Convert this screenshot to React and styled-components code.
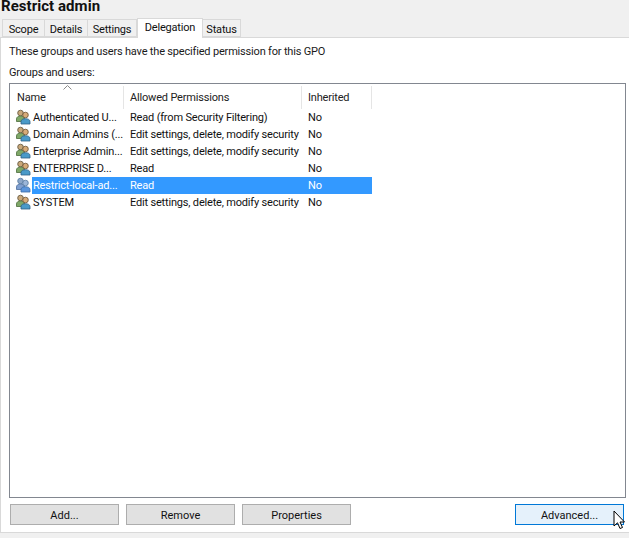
import React from "react";
import styled, { createGlobalStyle } from "styled-components";

const Global = createGlobalStyle`
  html, body { margin: 0; padding: 0; background: #f0f0f0; }
  body { font-family: Roboto, "Noto Sans", sans-serif; font-size: 11px; letter-spacing: -.18px; color: #000; }
`;
const Page = styled.div`
  position: relative; width: 629px; height: 538px; overflow: hidden; background: #f0f0f0;
  display: flex; flex-direction: column;
`;
const Title = styled.h1`
  margin: -3px 0 0 1px; height: 20px; font: 700 15px/19px Roboto, sans-serif; letter-spacing: .05px; color: #111; flex: none;
`;
const Tabs = styled.div`
  display: flex; height: 20px; padding-left: 2px; align-items: flex-end; position: relative; z-index: 1; flex: none;
`;
const Tab = styled.div`
  box-sizing: border-box; width: ${p => p.$w}px; height: ${p => p.$active ? 20 : 18}px;
  margin-bottom: ${p => p.$active ? -1 : 0}px;
  text-align: center; line-height: ${p => p.$active ? 18 : 19}px;
  background: ${p => p.$active ? "#fff" : "#f0f0f0"};
  border: 1px solid #d9d9d9; border-bottom: ${p => p.$active ? "none" : "1px solid #d9d9d9"};
  border-left-width: ${p => p.$first || p.$active ? 1 : 0}px;
  color: #111;
`;
const Panel = styled.div`
  box-sizing: border-box; height: 496px; background: #fff; border: 1px solid #d9d9d9; border-width: 1px 0 1px 1px;
  display: flex; flex-direction: column; padding: 6px 3px 7px 8px; flex: none;
`;
const Caption = styled.div`
  height: ${p => p.$h}px; line-height: 15px; color: #1a1a1a; flex: none;
`;
const List = styled.div`
  box-sizing: border-box; height: 415px; border: 1px solid #828790; padding-left: 5px; background: #fff; flex: none;
`;
const Row = styled.div`
  display: grid; grid-template-columns: 109px 178px 70px; width: 357px; box-sizing: border-box; height: 17px; align-items: center; line-height: 18px; color: #111;
`;
const HeaderRow = styled(Row)`
  height: 25px; position: relative;
`;
const HeadCell = styled.div`
  height: 23px; margin-top: 2px; line-height: 24px; padding-left: ${p => p.$pad || 6}px; border-right: 1px solid #e5e5e5; color: #222;
`;
const SortArrow = styled.svg`
  position: absolute; left: 48px; top: 1px;
`;
const NameCell = styled.div`
  display: flex; align-items: center; height: 17px; white-space: nowrap;
`;
const NameText = styled.span`
  flex: 1; padding-left: 1px; height: 17px; background: ${p => p.$sel ? "#3399ff" : "transparent"}; color: ${p => p.$sel ? "#fff" : "#111"};
`;
const SelCell = styled.div`
  padding-left: 6px; white-space: nowrap; background: ${p => p.$sel ? "#3399ff" : "transparent"}; color: ${p => p.$sel ? "#fff" : "#111"}; height: 17px;
`;
const Buttons = styled.div`
  display: flex; margin-top: 6px; padding-left: 1px; gap: 7px;
`;
const Button = styled.button`
  box-sizing: border-box; width: 109px; height: 21px; padding: 1px 0 0; margin-left: ${p => p.$ml || 0}px;
  font: inherit; line-height: 19px; color: #111; text-align: center;
  background: ${p => p.$focus ? "#e5f1fb" : "#e1e1e1"};
  border: 1px solid ${p => p.$focus ? "#0078d7" : "#adadad"};
`;
const Cursor = styled.svg`
  position: absolute; left: 613px; top: 510px;
`;

const UserIcon = ({ sel }) => (
  <svg width="17" height="17" viewBox="0 0 17 17" style={{ flex: "none" }}>
    <circle cx="5.500" cy="4" r="2.800" fill={sel ? "#8ca6c8" : "#c9a87a"} stroke={sel ? "#55789f" : "#5f5238"} strokeWidth=".8" />
    <path d="M1.500 12.500V10c0-2 1.800-3 4-3s4 1 4 3v2.500z" fill={sel ? "#7f9fd0" : "#7fa868"} stroke={sel ? "#4a6c9c" : "#4a6b3a"} strokeWidth=".8" />
    <circle cx="10.500" cy="6" r="2.800" fill={sel ? "#9cb6d8" : "#d8ab78"} stroke={sel ? "#55789f" : "#6a5030"} strokeWidth=".8" />
    <path d="M6 15v-2.500c0-1.800 2-2.800 4.500-2.800s4.500 1 4.500 2.800V15z" fill={sel ? "#5b95dc" : "#4a9ac8"} stroke={sel ? "#3a6aa5" : "#2d5f85"} strokeWidth=".8" />
  </svg>
);

const rows = [
  ["Authenticated U...", "Read (from Security Filtering)", "No"],
  ["Domain Admins (...", "Edit settings, delete, modify security", "No"],
  ["Enterprise Admin...", "Edit settings, delete, modify security", "No"],
  ["ENTERPRISE D...", "Read", "No"],
  ["Restrict-local-ad...", "Read", "No", true],
  ["SYSTEM", "Edit settings, delete, modify security", "No"],
];

export default function App() {
  return (
    <Page>
      <Global />
      <Title>Restrict admin</Title>
      <Tabs>
        <Tab $w={43} $first>Scope</Tab>
        <Tab $w={43}>Details</Tab>
        <Tab $w={49}>Settings</Tab>
        <Tab $w={66} $active>Delegation</Tab>
        <Tab $w={38}>Status</Tab>
      </Tabs>
      <Panel>
        <Caption $h={21}>These groups and users have the specified permission for this GPO</Caption>
        <Caption $h={18}>Groups and users:</Caption>
        <List>
          <HeaderRow>
            <HeadCell $pad={2}>Name</HeadCell>
            <HeadCell>Allowed Permissions</HeadCell>
            <HeadCell>Inherited</HeadCell>
            <SortArrow width="9" height="5" viewBox="0 0 9 5"><path d="M.5 4.500 4.500.5l4 4" fill="none" stroke="#8a8a8a" /></SortArrow>
          </HeaderRow>
          {rows.map(([name, perm, inh, sel]) => (
            <Row key={name}>
              <NameCell><UserIcon sel={sel} /><NameText $sel={sel}>{name}</NameText></NameCell>
              <SelCell $sel={sel}>{perm}</SelCell>
              <SelCell $sel={sel}>{inh}</SelCell>
            </Row>
          ))}
        </List>
        <Buttons>
          <Button>Add...</Button>
          <Button>Remove</Button>
          <Button>Properties</Button>
          <Button $focus $ml={157}>Advanced...</Button>
        </Buttons>
      </Panel>
      <Cursor width="13" height="20" viewBox="0 0 13 20">
        <path d="M1 1v15l3.500-3.200L7 18.500l2.500-1-2.500-5.500h4.500z" fill="#fff" stroke="#000" strokeWidth="1" />
      </Cursor>
    </Page>
  );
}
